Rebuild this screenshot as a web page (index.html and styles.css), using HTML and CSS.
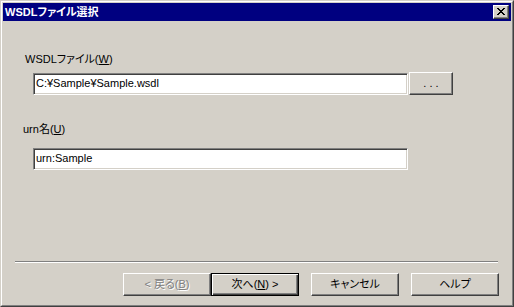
FILE: index.html
```html
<!DOCTYPE html>
<html lang="ja">
<head>
<meta charset="utf-8">
<title>WSDLファイル選択</title>
<link rel="stylesheet" href="styles.css">
</head>
<body>
<div class="window">
  <div class="window-inner">
    <div class="titlebar">
      <span class="title">WSDLファイル選択</span>
      <div class="close-btn">
        <svg width="8" height="7" viewBox="0 0 8 7" shape-rendering="crispEdges">
          <path d="M0 0h2v1h-2zM6 0h2v1h-2zM1 1h2v1h-2zM5 1h2v1h-2zM2 2h4v1h-4zM3 3h2v1h-2zM2 4h4v1h-4zM1 5h2v1h-2zM5 5h2v1h-2zM0 6h2v1h-2zM6 6h2v1h-2z" fill="#000"/>
        </svg>
      </div>
    </div>
    <div class="content">
      <div class="form">
        <div class="label label-wsdl">WSDLファイル(<u>W</u>)</div>
        <div class="row row-wsdl">
          <div class="textbox">C:¥Sample¥Sample.wsdl</div>
          <button class="btn btn-browse">. . .</button>
        </div>
        <div class="label label-urn">urn名(<u>U</u>)</div>
        <div class="row row-urn">
          <div class="textbox">urn:Sample</div>
        </div>
      </div>
      <div class="footer">
        <div class="separator"></div>
        <div class="buttons">
          <button class="btn btn-wide disabled">&lt; 戻る(<u>B</u>)</button>
          <button class="btn btn-wide default">次へ(<u>N</u>) &gt;</button>
          <button class="btn btn-wide gap">キャンセル</button>
          <button class="btn btn-wide gap">ヘルプ</button>
        </div>
      </div>
    </div>
  </div>
</div>
</body>
</html>
```
FILE: styles.css
```css
* { box-sizing: border-box; }
html, body {
  margin: 0;
  padding: 0;
  background: #d4d0c8;
}
body {
  font-family: "Liberation Sans", "Noto Sans CJK JP", sans-serif;
  font-size: 11px;
  color: #000;
  font-feature-settings: "palt";
}
.window {
  width: 514px;
  height: 307px;
  border-top: 1px solid #d4d0c8;
  border-left: 1px solid #d4d0c8;
  border-right: 1px solid #404040;
  border-bottom: 1px solid #404040;
  background: #d4d0c8;
}
.window-inner {
  height: 100%;
  border-top: 1px solid #fff;
  border-left: 1px solid #fff;
  border-right: 1px solid #808080;
  border-bottom: 1px solid #808080;
  padding: 1px;
  display: flex;
  flex-direction: column;
}
.titlebar {
  height: 18px;
  background: #000080;
  display: flex;
  align-items: center;
  justify-content: space-between;
  padding: 0 2px 0 2px;
}
.title {
  color: #fff;
  font-weight: bold;
  font-size: 11px;
  line-height: 14px;
}
.close-btn {
  width: 16px;
  height: 14px;
  background: #d4d0c8;
  border-top: 1px solid #fff;
  border-left: 1px solid #fff;
  border-right: 1px solid #404040;
  border-bottom: 1px solid #404040;
  box-shadow: inset -1px -1px 0 #808080;
  display: flex;
  align-items: center;
  justify-content: center;
  padding-bottom: 1px;
  padding-right: 1px;
}
.close-btn svg { display: block; }
.content {
  flex: 1;
  display: flex;
  flex-direction: column;
  justify-content: space-between;
}
.form {
  display: flex;
  flex-direction: column;
}
.label {
  height: 14px;
  line-height: 14px;
  white-space: nowrap;
}
.label-wsdl {
  margin-top: 31px;
  padding-left: 22px;
}
.label-urn {
  margin-top: 27px;
  padding-left: 20px;
}
.row {
  display: flex;
  align-items: flex-start;
  padding-left: 30px;
}
.row-wsdl { margin-top: 6px; }
.row-urn { margin-top: 12px; }
.textbox {
  width: 375px;
  height: 22px;
  background: #fff;
  border-top: 1px solid #808080;
  border-left: 1px solid #808080;
  border-right: 1px solid #fff;
  border-bottom: 1px solid #fff;
  box-shadow: inset 1px 1px 0 #404040, inset -1px -1px 0 #d4d0c8;
  padding: 0 2px;
  line-height: 19px;
  white-space: nowrap;
}
.row-wsdl .textbox { margin-top: 1px; }
.btn {
  font: inherit;
  font-feature-settings: "palt";
  color: #000;
  background: #d4d0c8;
  height: 23px;
  padding: 0;
  margin: 0;
  border-top: 1px solid #fff;
  border-left: 1px solid #fff;
  border-right: 1px solid #404040;
  border-bottom: 1px solid #404040;
  box-shadow: inset -1px -1px 0 #808080;
  border-radius: 0;
  line-height: 19px;
  white-space: nowrap;
}
.btn-browse {
  width: 44px;
  margin-left: 1px;
}
.footer {
  display: flex;
  flex-direction: column;
  padding: 0 13px 8px 12px;
}
.separator {
  height: 2px;
  border-top: 1px solid #808080;
  border-bottom: 1px solid #fff;
}
.buttons {
  display: flex;
  justify-content: flex-end;
  margin-top: 10px;
  margin-right: -1px;
}
.btn-wide { width: 88px; }
.btn-wide.gap { margin-left: 12px; }
.btn.default {
  border: 1px solid #000;
  box-shadow: inset 1px 1px 0 #fff, inset -1px -1px 0 #404040, inset -2px -2px 0 #808080;
}
.btn.disabled {
  color: #808080;
  text-shadow: 1px 1px 0 #fff;
}
```
